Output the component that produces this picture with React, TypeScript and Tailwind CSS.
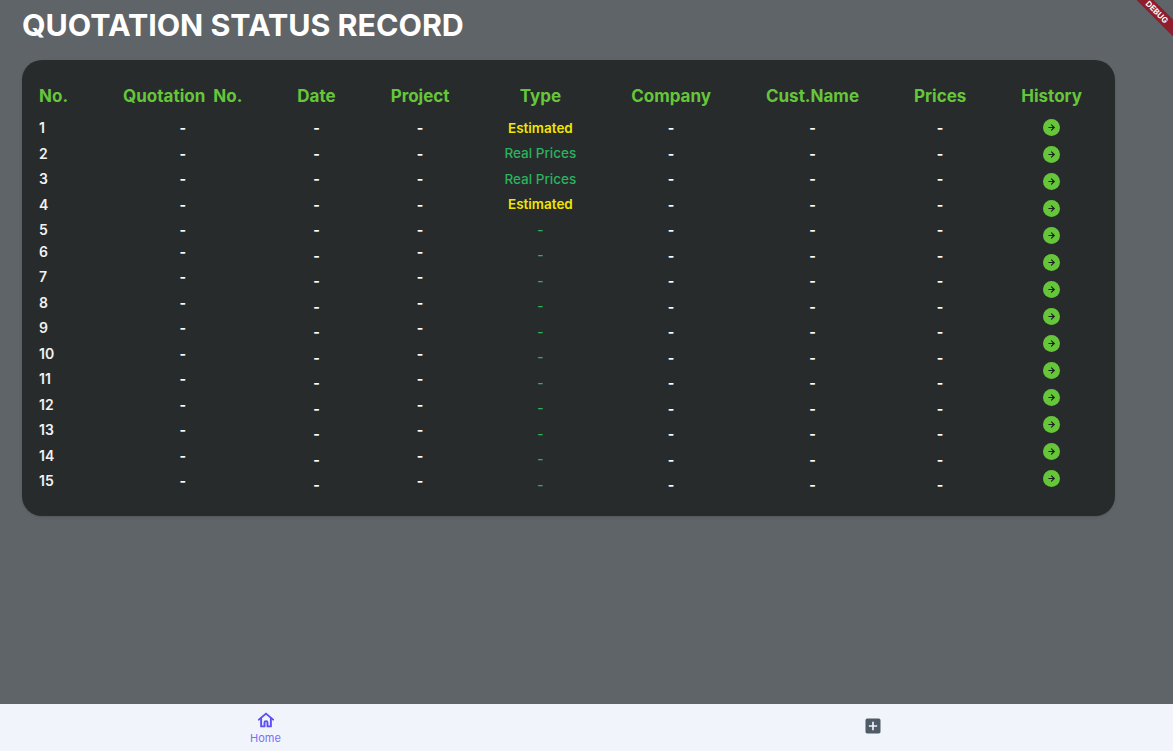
import React from "react";
import { ArrowRight } from "lucide-react";
import { MdAddBox } from "react-icons/md";

const rows = Array.from({ length: 15 }, (_, i) => i + 1);
const historyRows = rows.slice(0, 14);

const typeCell = (row: number) => {
  if (row === 1 || row === 4) {
    return <span className="text-[13.5px] font-semibold text-[#f2e600]">Estimated</span>;
  }
  if (row === 2 || row === 3) {
    return <span className="text-[13.5px] font-medium text-[#2ab35c]">Real Prices</span>;
  }
  return <span className="text-[13.5px] font-medium text-[#2ab35c]">-</span>;
};

// some columns sit a few px higher from row 6 on, same as the original
const Column = ({
  title,
  shifted,
  left,
  render,
}: {
  title: string;
  shifted?: boolean;
  left?: boolean;
  render: (row: number) => React.ReactNode;
}) => {
  return (
    <div className={`flex flex-col ${left ? "items-start" : "items-center"}`}>
      <h3 className="h-[30px] whitespace-pre text-[17px] leading-[22px] font-bold text-[#66c63a]">
        {title}
      </h3>
      {rows.map((row) => (
        <div
          key={row}
          className={`flex h-[25.5px] items-center text-[14px] ${
            shifted && row === 6 ? "mt-[-4px]" : ""
          }`}
        >
          {render(row)}
        </div>
      ))}
    </div>
  );
};

const dash = () => <span className="font-bold text-white">-</span>;

export default function App() {
  return (
    <div className="flex h-screen flex-col bg-[#5f6468] font-['Inter',sans-serif]">
      <div className="absolute top-0 right-0 h-[36px] w-[36px] overflow-hidden">
        <div className="absolute top-[6px] left-[-10px] flex h-[12px] w-[60px] rotate-45 items-center justify-center bg-[#8f1d2c] text-[8px] font-bold text-white">
          DEBUG
        </div>
      </div>

      <main className="flex-1 pl-[22px]">
        <h1 className="h-[60px] pt-[7px] text-[30.4px] leading-[36px] font-bold text-white">
          QUOTATION STATUS RECORD
        </h1>
        <div className="flex w-[1093px] justify-between rounded-[20px] bg-[#272b2c] pt-[25px] pr-[33px] pb-[18px] pl-[17px] shadow-sm">
          <Column
            title="No."
            left
            shifted
            render={(row) => <span className="font-semibold text-[#f2f2f2]">{row}</span>}
          />
          <Column title="Quotation  No." shifted render={dash} />
          <Column title="Date" render={dash} />
          <Column title="Project" shifted render={dash} />
          <Column title="Type" render={typeCell} />
          <Column title="Company" render={dash} />
          <Column title="Cust.Name" render={dash} />
          <Column title="Prices" render={dash} />
          <div className="flex flex-col items-center">
            <h3 className="h-[29px] text-[17px] leading-[22px] font-bold text-[#66c63a]">
              History
            </h3>
            {historyRows.map((row) => (
              <div key={row} className="flex h-[27px] items-center">
                <div className="flex h-[17px] w-[17px] items-center justify-center rounded-full bg-[#66c63a]">
                  <ArrowRight size={9} strokeWidth={3.2} className="text-[#1d2122]" />
                </div>
              </div>
            ))}
          </div>
        </div>
      </main>

      <nav className="flex h-[47px] items-start justify-between bg-[#f1f5fb] pr-[290px] pl-[250px]">
        <div className="flex w-[31px] flex-col items-center pt-[7px]">
          <svg
            width="18"
            height="18"
            viewBox="0 0 24 24"
            fill="none"
            stroke="#5b4ff5"
            strokeWidth="2.6"
            strokeLinejoin="round"
            strokeLinecap="round"
          >
            <path d="M2.5 11.5 12 3.5l9.5 8" />
            <path d="M5.5 10v10.5h4.5v-5a2 2 0 0 1 4 0v5h4.5V10" />
          </svg>
          <span className="mt-[2px] text-[11px] leading-[15px] text-[#7a6ff7]">Home</span>
        </div>
        <MdAddBox size={20} className="mt-[12px] text-[#4f5b66]" />
      </nav>
    </div>
  );
}
